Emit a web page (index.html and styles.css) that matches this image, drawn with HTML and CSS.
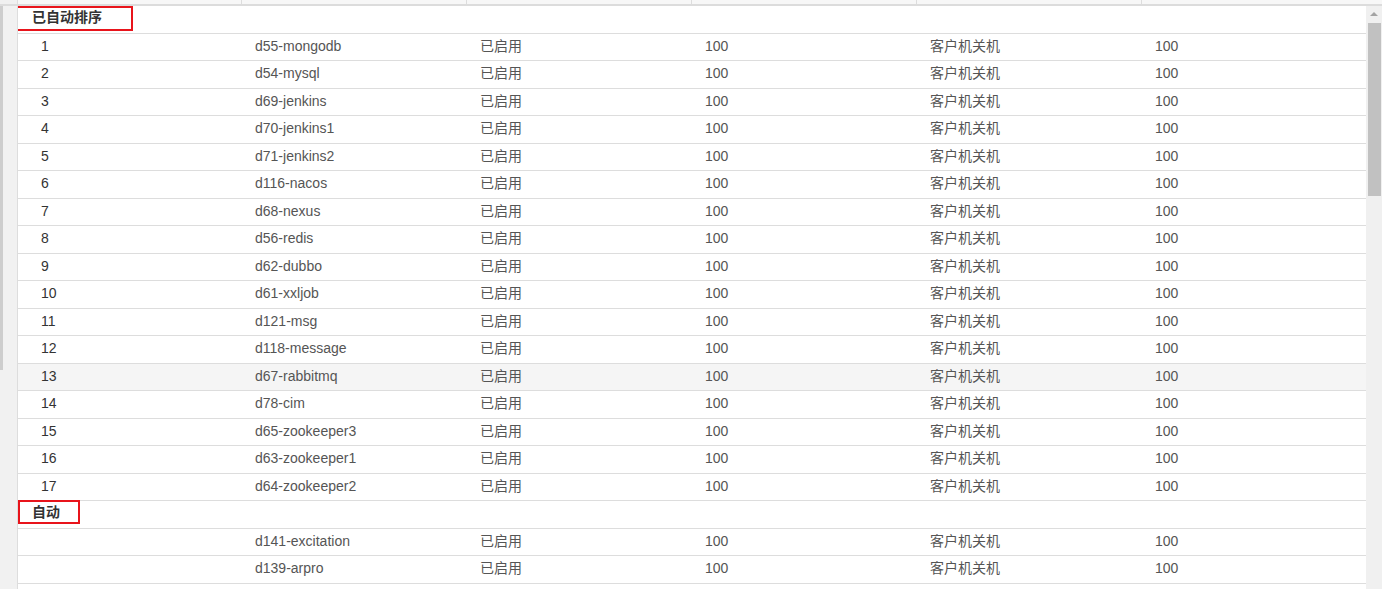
FILE: index.html
```html
<!DOCTYPE html>
<html lang="zh">
<head>
<meta charset="utf-8">
<title>排序</title>
<link rel="stylesheet" href="styles.css">
</head>
<body>
<div class="page">
  <div class="head">
    <div class="hcell"></div><div class="hcell"></div><div class="hcell"></div><div class="hcell"></div><div class="hcell"></div><div class="hcell"></div>
  </div>
  <div class="content">
    <div class="gutter"><div class="gutter-bar"></div></div>
    <div class="table">
      <div class="row group"><div class="label">已自动排序</div></div>
      <div class="row"><div class="c num">1</div><div class="c">d55-mongodb</div><div class="c">已启用</div><div class="c">100</div><div class="c">客户机关机</div><div class="c">100</div></div>
      <div class="row"><div class="c num">2</div><div class="c">d54-mysql</div><div class="c">已启用</div><div class="c">100</div><div class="c">客户机关机</div><div class="c">100</div></div>
      <div class="row"><div class="c num">3</div><div class="c">d69-jenkins</div><div class="c">已启用</div><div class="c">100</div><div class="c">客户机关机</div><div class="c">100</div></div>
      <div class="row"><div class="c num">4</div><div class="c">d70-jenkins1</div><div class="c">已启用</div><div class="c">100</div><div class="c">客户机关机</div><div class="c">100</div></div>
      <div class="row"><div class="c num">5</div><div class="c">d71-jenkins2</div><div class="c">已启用</div><div class="c">100</div><div class="c">客户机关机</div><div class="c">100</div></div>
      <div class="row"><div class="c num">6</div><div class="c">d116-nacos</div><div class="c">已启用</div><div class="c">100</div><div class="c">客户机关机</div><div class="c">100</div></div>
      <div class="row"><div class="c num">7</div><div class="c">d68-nexus</div><div class="c">已启用</div><div class="c">100</div><div class="c">客户机关机</div><div class="c">100</div></div>
      <div class="row"><div class="c num">8</div><div class="c">d56-redis</div><div class="c">已启用</div><div class="c">100</div><div class="c">客户机关机</div><div class="c">100</div></div>
      <div class="row"><div class="c num">9</div><div class="c">d62-dubbo</div><div class="c">已启用</div><div class="c">100</div><div class="c">客户机关机</div><div class="c">100</div></div>
      <div class="row"><div class="c num">10</div><div class="c">d61-xxljob</div><div class="c">已启用</div><div class="c">100</div><div class="c">客户机关机</div><div class="c">100</div></div>
      <div class="row"><div class="c num">11</div><div class="c">d121-msg</div><div class="c">已启用</div><div class="c">100</div><div class="c">客户机关机</div><div class="c">100</div></div>
      <div class="row"><div class="c num">12</div><div class="c">d118-message</div><div class="c">已启用</div><div class="c">100</div><div class="c">客户机关机</div><div class="c">100</div></div>
      <div class="row hover"><div class="c num">13</div><div class="c">d67-rabbitmq</div><div class="c">已启用</div><div class="c">100</div><div class="c">客户机关机</div><div class="c">100</div></div>
      <div class="row"><div class="c num">14</div><div class="c">d78-cim</div><div class="c">已启用</div><div class="c">100</div><div class="c">客户机关机</div><div class="c">100</div></div>
      <div class="row"><div class="c num">15</div><div class="c">d65-zookeeper3</div><div class="c">已启用</div><div class="c">100</div><div class="c">客户机关机</div><div class="c">100</div></div>
      <div class="row"><div class="c num">16</div><div class="c">d63-zookeeper1</div><div class="c">已启用</div><div class="c">100</div><div class="c">客户机关机</div><div class="c">100</div></div>
      <div class="row"><div class="c num">17</div><div class="c">d64-zookeeper2</div><div class="c">已启用</div><div class="c">100</div><div class="c">客户机关机</div><div class="c">100</div></div>
      <div class="row group"><div class="label">自动</div></div>
      <div class="row"><div class="c num"></div><div class="c">d141-excitation</div><div class="c">已启用</div><div class="c">100</div><div class="c">客户机关机</div><div class="c">100</div></div>
      <div class="row"><div class="c num"></div><div class="c">d139-arpro</div><div class="c">已启用</div><div class="c">100</div><div class="c">客户机关机</div><div class="c">100</div></div>
      <div class="row"><div class="c num"></div><div class="c"></div><div class="c"></div><div class="c"></div><div class="c"></div><div class="c"></div></div>
      <div class="mark mark-1"></div>
      <div class="mark mark-2"></div>
    </div>
    <div class="scrollbar">
      <div class="arrow"></div>
      <div class="thumb"></div>
    </div>
  </div>
</div>
</body>
</html>
```

FILE: styles.css
```css
html, body {
  margin: 0;
  padding: 0;
  background: #ffffff;
}
body {
  font-family: "Liberation Sans", Arial, "Noto Sans CJK SC", sans-serif;
  font-size: 14px;
  color: #555555;
  overflow: hidden;
}
.page {
  width: 1382px;
  height: 589px;
  display: flex;
  flex-direction: column;
  overflow: hidden;
}
.head {
  height: 4px;
  flex: none;
  background: #f7f7f7;
  border-bottom: 2px solid #dcdcdc;
  display: grid;
  grid-template-columns: 17px 224px 225px 225px 225px 225px 1fr;
}
.hcell {
  border-left: 1px solid #dddddd;
}
.head::before {
  content: "";
  background: #f0f0f0;
}
.content {
  flex: 1;
  display: flex;
  min-height: 0;
}
.gutter {
  width: 17px;
  flex: none;
  background: #f1f1f1;
  border-right: 1px solid #dddddd;
}
.gutter-bar {
  width: 3px;
  height: 364px;
  background: #cdcdcd;
}
.table {
  flex: 1;
  position: relative;
  overflow: hidden;
}
.row {
  height: 27.5px;
  box-sizing: border-box;
  border-bottom: 1px solid #dddddd;
  display: grid;
  grid-template-columns: 223px 225px 225px 225px 225px 1fr;
  align-items: center;
}
.row.hover {
  background: #f5f5f5;
}
.c {
  padding-left: 14px;
  padding-bottom: 2px;
  white-space: nowrap;
  line-height: 16px;
}
.c.num {
  padding-left: 23px;
  color: #333333;
}
.label {
  padding-left: 14px;
  padding-bottom: 4px;
  line-height: 16px;
  font-weight: bold;
  color: #333333;
  grid-column: 1 / 3;
}
.mark {
  position: absolute;
  border: 2px solid #e8141b;
  box-sizing: border-box;
}
.mark-1 {
  left: -8px;
  top: 0;
  width: 123px;
  height: 25px;
}
.mark-2 {
  left: 0;
  top: 494px;
  width: 62px;
  height: 24px;
}
.scrollbar {
  width: 16px;
  flex: none;
  background: #f0f0f0;
  position: relative;
  display: flex;
  flex-direction: column;
  align-items: center;
}
.arrow {
  margin-top: 6px;
  width: 0;
  height: 0;
  border-left: 4px solid transparent;
  border-right: 4px solid transparent;
  border-bottom: 4px solid #a3a3a3;
}
.thumb {
  margin-top: 7px;
  width: 13px;
  height: 173px;
  background: #c1c1c1;
  margin-left: 1px;
}
```
